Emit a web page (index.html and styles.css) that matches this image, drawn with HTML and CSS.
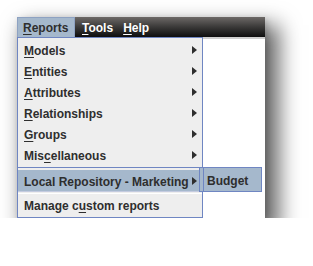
FILE: index.html
```html
<!DOCTYPE html>
<html lang="en">
<head>
    <meta charset="UTF-8">
    <title>Reports menu</title>
    <link rel="stylesheet" href="styles.css">
</head>
<body>
    <div class="window">
        <div class="menubar">
            <span class="menubar-item active"><u>R</u>eports</span>
            <span class="menubar-item"><u>T</u>ools</span>
            <span class="menubar-item"><u>H</u>elp</span>
        </div>

        <div class="workspace">
            <ul class="menu">
                <li class="menu-item"><span><u>M</u>odels</span><i class="arrow"></i></li>
                <li class="menu-item"><span><u>E</u>ntities</span><i class="arrow"></i></li>
                <li class="menu-item"><span><u>A</u>ttributes</span><i class="arrow"></i></li>
                <li class="menu-item"><span><u>R</u>elationships</span><i class="arrow"></i></li>
                <li class="menu-item"><span><u>G</u>roups</span><i class="arrow"></i></li>
                <li class="menu-item"><span>Mis<u>c</u>ellaneous</span><i class="arrow"></i></li>
                <li class="separator first"></li>
                <li class="menu-item selected"><span>Local Repository - Marketing</span><i class="arrow"></i></li>
                <li class="separator"></li>
                <li class="menu-item"><span>Manage c<u>u</u>stom reports</span></li>
            </ul>
            <div class="canvas"></div>

            <!-- submenu of the selected repository -->
            <ul class="submenu">
                <li class="menu-item selected"><span>Budget</span></li>
            </ul>
        </div>
    </div>
</body>
</html>
```

FILE: styles.css
```css
:root {
    --menu-bg: #eeeeee;
    --menu-border: #6f86c2;
    --select-bg: #a5b8cc;
    --text-color: #2e2e2e;
}

* {
    box-sizing: border-box;
    margin: 0;
    padding: 0;
}

body {
    font-family: 'Liberation Sans', Arial, sans-serif;
    font-size: 12px;
    font-weight: bold;
    color: var(--text-color);
    background-color: #ffffff;
    padding: 17px 0 0 17px;
}

.window {
    width: 248px;
    height: 201px;
    background-color: #ffffff;
    display: flex;
    flex-direction: column;
    box-shadow: 10px 12px 20px 4px rgba(0, 0, 0, 0.6), 2px 2px 6px rgba(0, 0, 0, 0.15);
}

/* menubar */
.menubar {
    height: 20px;
    display: flex;
    background: linear-gradient(#6d6967, #3a3938 50%, #0e0e0e);
}

.menubar-item {
    line-height: 20px;
    padding: 1px 5px 0;
    color: #ffffff;
}

.menubar-item.active {
    width: 58px;
    padding: 1px 6px 0 5px;
    line-height: 18px;
    margin-right: 2px;
    color: var(--text-color);
    background-color: var(--select-bg);
    border: 1px solid #8ea2c2;
    border-bottom: none;
}

u {
    text-decoration-thickness: 1px;
    text-underline-offset: 2px;
}

/* popup area */
.workspace {
    flex: 1;
    display: flex;
    position: relative;
}

.menu {
    width: 186px;
    list-style: none;
    background-color: var(--menu-bg);
    border: 1px solid var(--menu-border);
    padding: 1px 0 2px;
}

.canvas {
    flex: 1;
    border-top: 2px solid #cfcfcf;
}

.menu-item {
    height: 21px;
    line-height: 18px;
    padding: 0 5px 0 6px;
    display: flex;
    align-items: center;
    justify-content: space-between;
    white-space: nowrap;
}

.menu-item span {
    padding-top: 3px;
}

.menu-item.selected {
    background-color: var(--select-bg);
}

.arrow {
    width: 0;
    height: 0;
    border-top: 4px solid transparent;
    border-bottom: 4px solid transparent;
    border-left: 5px solid var(--text-color);
}

.separator {
    height: 3px;
    border-top: 1px solid #c4cbe0;
    border-bottom: 1px solid #ffffff;
}

.separator.first {
    height: 5px;
    border-top: none;
    border-bottom: none;
    background: linear-gradient(transparent 2px, var(--menu-border) 2px, var(--menu-border) 3px, transparent 3px);
}

.submenu {
    position: absolute;
    top: 130px;
    left: 182px;
    width: 63px;
    height: 25px;
    list-style: none;
    background-color: var(--select-bg);
    border: 1px solid var(--menu-border);
}

/* the main menu edge stays visible through the submenu */
.submenu::before {
    content: '';
    position: absolute;
    top: -1px;
    bottom: -1px;
    left: 3px;
    width: 1px;
    background-color: var(--menu-border);
}

.submenu .menu-item {
    height: 23px;
    padding-left: 7px;
}
```
